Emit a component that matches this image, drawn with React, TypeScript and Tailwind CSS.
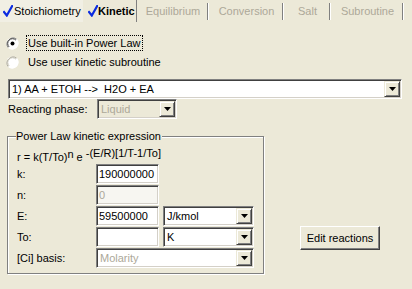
import React from "react";

const sunken =
  "border border-t-[#808080] border-l-[#808080] border-b-white border-r-white shadow-[inset_1px_1px_0_#404040,inset_-1px_-1px_0_#d4d0c8]";

function Check() {
  return (
    <svg width="10" height="12" viewBox="0 0 10 12" className="shrink-0">
      <path d="M1 7 L3.8 10.5 L9.2 1" fill="none" stroke="#0B2BE0" strokeWidth="2.2" strokeLinecap="square" />
    </svg>
  );
}

function Arrow() {
  return (
    <svg width="7" height="4" viewBox="0 0 7 4">
      <path d="M0 0 H7 L3.5 4 Z" fill="#000" />
    </svg>
  );
}

function DropBtn() {
  return (
    <div className="w-[16px] h-full shrink-0 bg-[#ECE9D8] border border-t-[#ECE9D8] border-l-[#ECE9D8] border-b-[#404040] border-r-[#404040] shadow-[inset_1px_1px_0_#fff,inset_-1px_-1px_0_#808080] flex items-center justify-center">
      <Arrow />
    </div>
  );
}

function Combo({
  w,
  text,
  disabled,
  bg = "bg-white",
}: {
  w: string;
  text: string;
  disabled?: boolean;
  bg?: string;
}) {
  return (
    <div className={`${w} h-[20px] ${sunken} ${bg} flex items-stretch p-[1px]`}>
      <div className={`flex-1 flex items-center pl-[2px] whitespace-pre ${disabled ? "text-[#ACA899]" : "text-black"}`}>{text}</div>
      <DropBtn />
    </div>
  );
}

function Input({ text, disabled }: { text: string; disabled?: boolean }) {
  return (
    <div className={`w-[63px] h-[20px] ${sunken} ${disabled ? "bg-[#F7F6F1] text-[#ACA899]" : "bg-white text-black"} flex items-center pl-[2px]`}>
      {text}
    </div>
  );
}

function Radio({ checked }: { checked?: boolean }) {
  return (
    <svg width="13" height="13" viewBox="0 0 13 13" className="shrink-0">
      <circle cx="6.5" cy="6.5" r="6" fill="#fff" />
      <path d="M10.7 2.3 A6 6 0 0 0 2.3 10.7" fill="none" stroke={checked ? "#808080" : "#A8A597"} strokeWidth="1" />
      <path d="M2.3 10.7 A6 6 0 0 0 10.7 2.3" fill="none" stroke="#fff" strokeWidth="1" />
      <path d="M9.9 3.1 A4.8 4.8 0 0 0 3.1 9.9" fill="none" stroke={checked ? "#404040" : "#C4C1B3"} strokeWidth="1" />
      {checked && <circle cx="6.5" cy="6.5" r="2" fill="#000" />}
    </svg>
  );
}

function Tab({ w, label, sep = true }: { w: string; label: string; sep?: boolean }) {
  return (
    <div className={`${w} h-[22px] flex items-center justify-center relative`}>
      <span className="text-[#ACA899]">{label}</span>
      {sep && <div className="absolute right-0 top-[3px] h-[17px] w-[2px] border-l border-l-[#808080] border-r border-r-white" />}
    </div>
  );
}

function Row({ label, children }: { label: string; children: React.ReactNode }) {
  return (
    <div className="flex items-center h-[20px]">
      <div className="w-[79px]">{label}</div>
      {children}
    </div>
  );
}

export default function App() {
  return (
    <div className="w-[412px] h-[289px] bg-[#ECE9D8] overflow-hidden font-['Liberation_Sans',Arial,sans-serif] text-[11px] leading-[13px] text-black">
      {/* Tabs */}
      <div className="flex h-[22px]">
        <div className="w-[83px] h-[22px] flex items-center pl-[3px] gap-[1px] bg-[#F1EFE4]">
          <Check />
          <span>Stoichiometry</span>
        </div>
        <div className="w-[54px] h-[22px] flex items-center pl-[5px] border-r border-r-[#808080]">
          <Check />
          <span className="font-bold">Kinetic</span>
        </div>
        <Tab w="w-[72px]" label="Equilibrium" />
        <Tab w="w-[75px]" label="Conversion" />
        <Tab w="w-[47px]" label="Salt" />
        <Tab w="w-[73px]" label="Subroutine" />
      </div>

      {/* Radios */}
      <div className="flex items-center h-[16px] mt-[13px] pl-[6px]">
        <Radio checked />
        <div className="ml-[7px] h-[16px] px-[1px] flex items-center border border-dotted border-black">Use built-in Power Law</div>
      </div>
      <div className="flex items-center h-[16px] mt-[3px] pl-[6px]">
        <Radio />
        <div className="ml-[9px]">Use user kinetic subroutine</div>
      </div>

      {/* Reaction dropdown */}
      <div className="ml-[8px] mt-[9px]">
        <Combo w="w-[394px]" text="1) AA + ETOH -->  H2O + EA" />
      </div>

      {/* Reacting phase */}
      <div className="flex items-center h-[20px] ml-[8px]">
        <div className="w-[89px]">Reacting phase:</div>
        <Combo w="w-[80px]" text="Liquid" disabled bg="bg-[#ECE9D8]" />
      </div>

      {/* Group + button */}
      <div className="flex items-end mt-[17px] ml-[7px]">
        <div className="w-[257px] h-[138px] border border-[#808080] shadow-[1px_1px_0_#fff,inset_1px_1px_0_#fff] pl-[9px]">
          <div className="h-[13px] -mt-[7px] -ml-[1px] w-fit bg-[#ECE9D8] pr-[1px]">Power Law kinetic expression</div>
          <div className="h-[13px] mt-[4px] whitespace-pre">
            r = k(T/To)<span className="align-[3px]">n</span> e <span className="align-[4px]">-(E/R)[1/T-1/To]</span>
          </div>
          <div className="mt-[4px] flex flex-col gap-[1px]">
            <Row label="k:">
              <Input text="190000000" />
            </Row>
            <Row label="n:">
              <Input text="0" disabled />
            </Row>
            <Row label="E:">
              <Input text="59500000" />
              <div className="ml-[4px]">
                <Combo w="w-[91px]" text="J/kmol" />
              </div>
            </Row>
            <Row label="To:">
              <Input text="" />
              <div className="ml-[4px]">
                <Combo w="w-[91px]" text="K" />
              </div>
            </Row>
            <Row label="[Ci] basis:">
              <Combo w="w-[158px]" text="Molarity" disabled />
            </Row>
          </div>
        </div>
        <button className="ml-[36px] mb-[24px] w-[80px] h-[24px] bg-[#ECE9D8] border border-t-white border-l-white border-b-[#404040] border-r-[#404040] shadow-[inset_-1px_-1px_0_#808080] flex items-center justify-center">
          Edit reactions
        </button>
      </div>
    </div>
  );
}
